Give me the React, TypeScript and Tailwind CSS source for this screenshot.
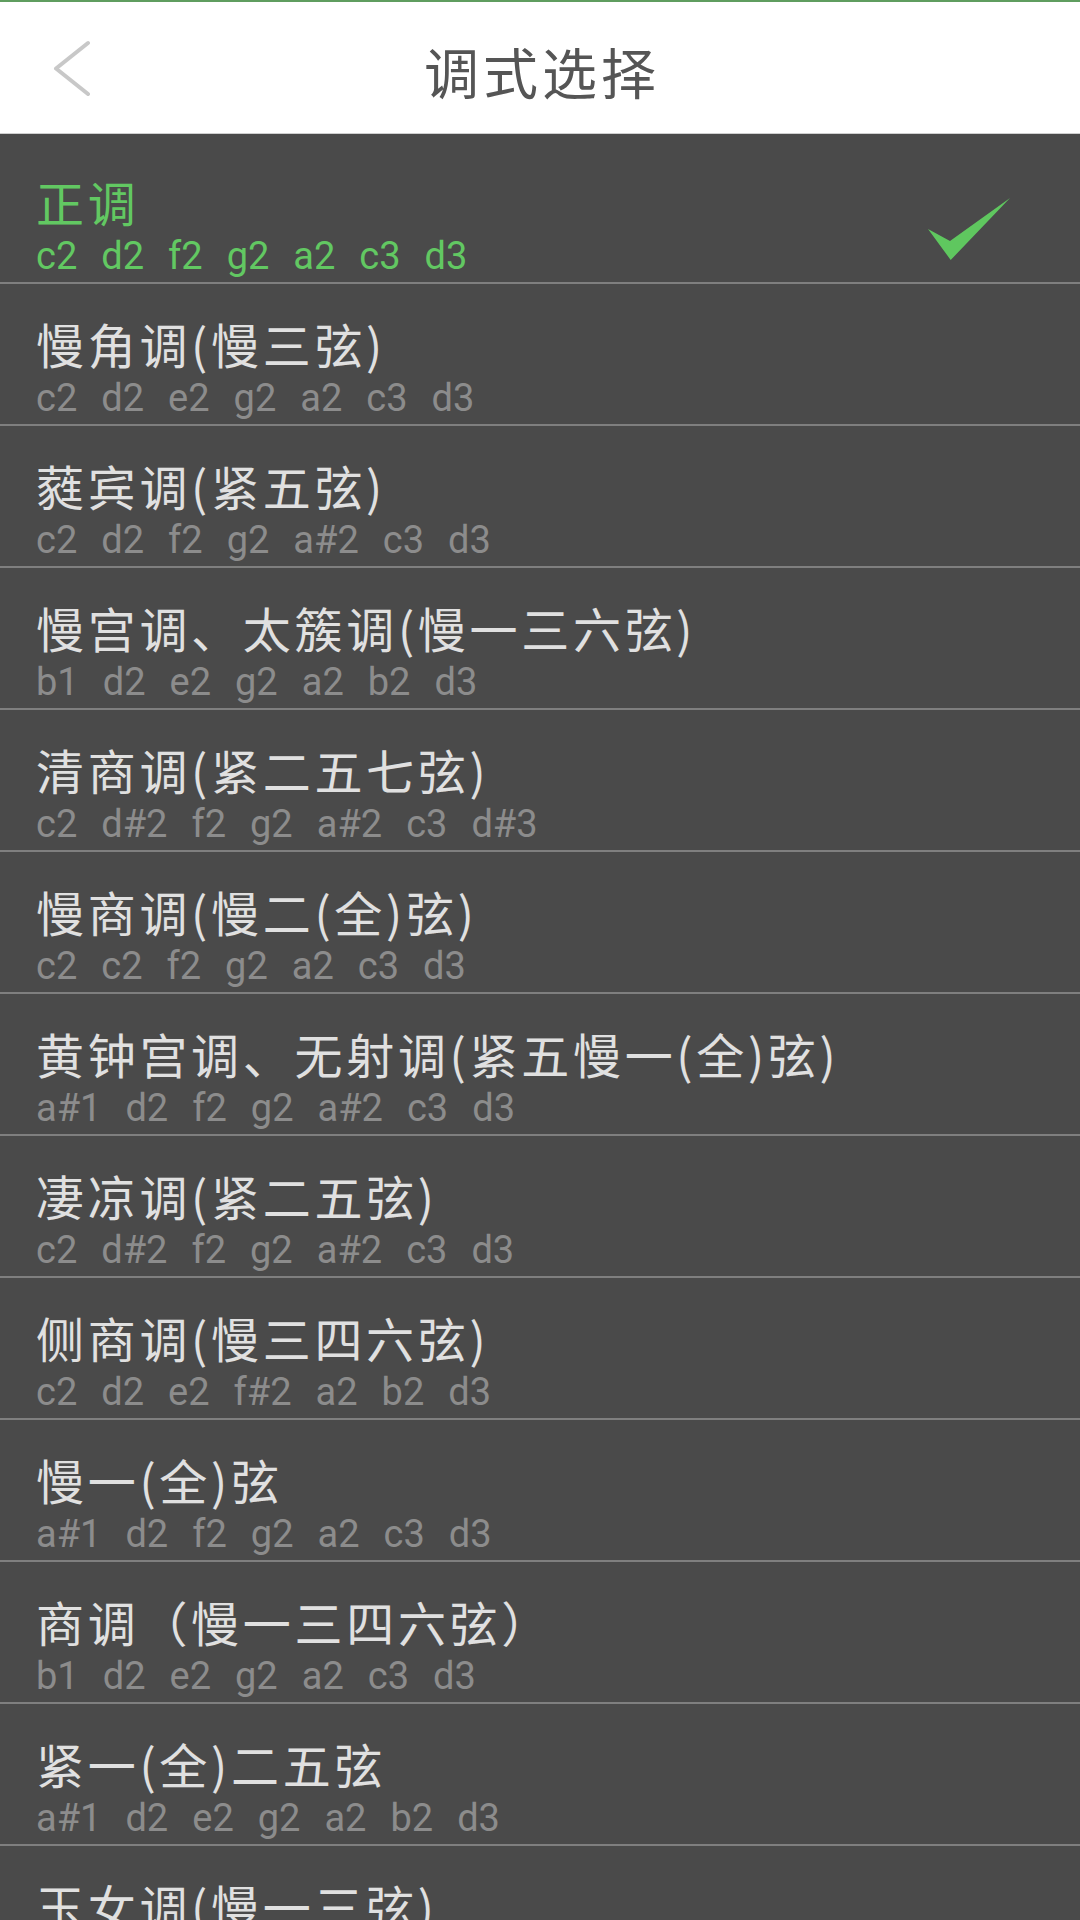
import React from 'react';

const modes = [
  { name: '正调', notes: ['c2', 'd2', 'f2', 'g2', 'a2', 'c3', 'd3'] },
  { name: '慢角调(慢三弦)', notes: ['c2', 'd2', 'e2', 'g2', 'a2', 'c3', 'd3'] },
  { name: '蕤宾调(紧五弦)', notes: ['c2', 'd2', 'f2', 'g2', 'a#2', 'c3', 'd3'] },
  { name: '慢宫调、太簇调(慢一三六弦)', notes: ['b1', 'd2', 'e2', 'g2', 'a2', 'b2', 'd3'] },
  { name: '清商调(紧二五七弦)', notes: ['c2', 'd#2', 'f2', 'g2', 'a#2', 'c3', 'd#3'] },
  { name: '慢商调(慢二(全)弦)', notes: ['c2', 'c2', 'f2', 'g2', 'a2', 'c3', 'd3'] },
  { name: '黄钟宫调、无射调(紧五慢一(全)弦)', notes: ['a#1', 'd2', 'f2', 'g2', 'a#2', 'c3', 'd3'] },
  { name: '凄凉调(紧二五弦)', notes: ['c2', 'd#2', 'f2', 'g2', 'a#2', 'c3', 'd3'] },
  { name: '侧商调(慢三四六弦)', notes: ['c2', 'd2', 'e2', 'f#2', 'a2', 'b2', 'd3'] },
  { name: '慢一(全)弦', notes: ['a#1', 'd2', 'f2', 'g2', 'a2', 'c3', 'd3'] },
  { name: '商调（慢一三四六弦）', notes: ['b1', 'd2', 'e2', 'g2', 'a2', 'c3', 'd3'] },
  { name: '紧一(全)二五弦', notes: ['a#1', 'd2', 'e2', 'g2', 'a2', 'b2', 'd3'] },
  { name: '玉女调(慢一三弦)', notes: ['a#1', 'd2', 'e2', 'g2', 'a2', 'c3', 'd3'] },
];

const cjk = { fontFamily: "'Noto Sans CJK SC', sans-serif" };
const latin = { fontFamily: "Roboto, 'Noto Sans', sans-serif" };

const Header: React.FC = () => (
  <header className="bg-white border-t-2 border-t-[#5f9d5f] border-b border-b-[#cfcfcf]">
    <div className="h-[131px] grid grid-cols-[1fr_auto_1fr] items-center">
      <button className="pl-[52px] flex items-center">
        <svg width="40" height="56" viewBox="0 0 40 56" fill="none">
          <polyline points="36,3 4,28.5 36,54" stroke="#c8c8c8" strokeWidth="4" strokeLinecap="round" strokeLinejoin="round" />
        </svg>
      </button>
      <h1 className="text-[55px] leading-[64px] tracking-[4px] text-[#555555] mt-[4px] pl-[4px]" style={cjk}>
        调式选择
      </h1>
      <div />
    </div>
  </header>
);

const Check: React.FC = () => (
  <svg width="86" height="64" viewBox="0 0 86 64" className="self-end mb-[20px] mr-[68px]">
    <polygon points="2,31 24,43 84,0 24.7,62" fill="#5fc75f" />
  </svg>
);

const App: React.FC = () => {
  const selected = 0;

  return (
    <div className="w-[1080px] min-h-[1920px] bg-[#4a4a4a]">
      <Header />
      <ul>
        {modes.map((mode, i) => {
          const active = i === selected;
          return (
            <li key={mode.name} className="border-b-2 border-[#7f7f7f]">
              <div className={`flex justify-between ${active ? 'h-[148px] pt-[39px]' : 'h-[140px] pt-[31px]'}`}>
                <div className="pl-[36px] flex flex-col">
                  <div
                    className={`text-[48px] leading-[56px] tracking-[3.7px] whitespace-nowrap ${active ? 'text-[#62c862]' : 'text-[#e0e0e0]'}`}
                    style={cjk}
                  >
                    {mode.name}
                  </div>
                  <div
                    className={`mt-[3px] flex gap-[24px] text-[38px] leading-[48px] ${active ? 'text-[#62c862]' : 'text-[#8c8c8c]'}`}
                    style={latin}
                  >
                    {mode.notes.map((n, j) => (
                      <span key={j}>{n}</span>
                    ))}
                  </div>
                </div>
                {active && <Check />}
              </div>
            </li>
          );
        })}
      </ul>
    </div>
  );
};

export default App;
